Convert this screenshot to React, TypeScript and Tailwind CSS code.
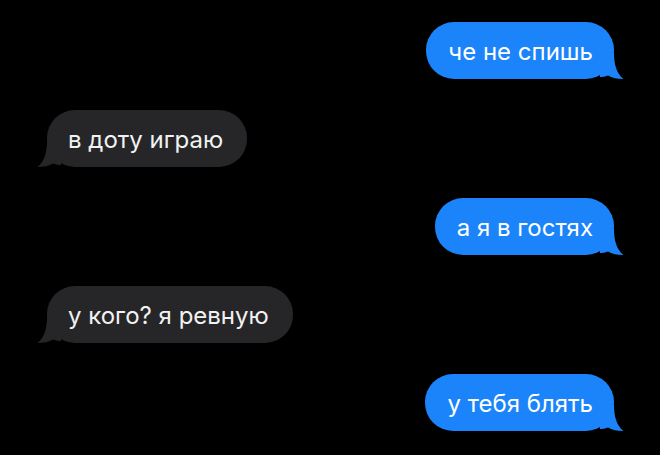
import React from "react";

type Msg = { text: string; me: boolean };

const msgs: Msg[] = [
  { text: "че не спишь", me: true },
  { text: "в доту играю", me: false },
  { text: "а я в гостях", me: true },
  { text: "у кого? я ревную", me: false },
  { text: "у тебя блять", me: true },
];

function Tail({ me }: { me: boolean }) {
  return (
    <svg
      width="24"
      height="26"
      viewBox="0 0 24 26"
      className={
        me
          ? "absolute bottom-0 right-[-10px]"
          : "absolute bottom-0 left-[-10px] scale-x-[-1]"
      }
    >
      <path
        d="M0 0 L14 0 C14 12 17 21 23.5 26 C17 26 12 25 8 22.5 C5 23.5 2 24 0 24 Z"
        fill={me ? "#1b84fb" : "#262629"}
      />
    </svg>
  );
}

export default function App() {
  return (
    <div
      className="w-[660px] h-[455px] bg-black flex flex-col gap-[31px] pt-[22px] overflow-hidden"
      style={{ fontFamily: "Inter, 'Noto Sans', sans-serif" }}
    >
      {msgs.map((m, i) => (
        <div
          key={i}
          className={m.me ? "flex justify-end pr-[46px]" : "flex justify-start pl-[47px]"}
        >
          <div
            className={
              "relative rounded-[28px] pt-[15px] pb-[13px] text-[24px] leading-[29px] " +
              (m.me
                ? "bg-[#1b84fb] text-white pl-[22px] pr-[21px]"
                : "bg-[#262629] text-[#f2f2f2] pl-[21px] pr-[24px]")
            }
          >
            <Tail me={m.me} />
            <span className="relative">{m.text}</span>
          </div>
        </div>
      ))}
    </div>
  );
}
